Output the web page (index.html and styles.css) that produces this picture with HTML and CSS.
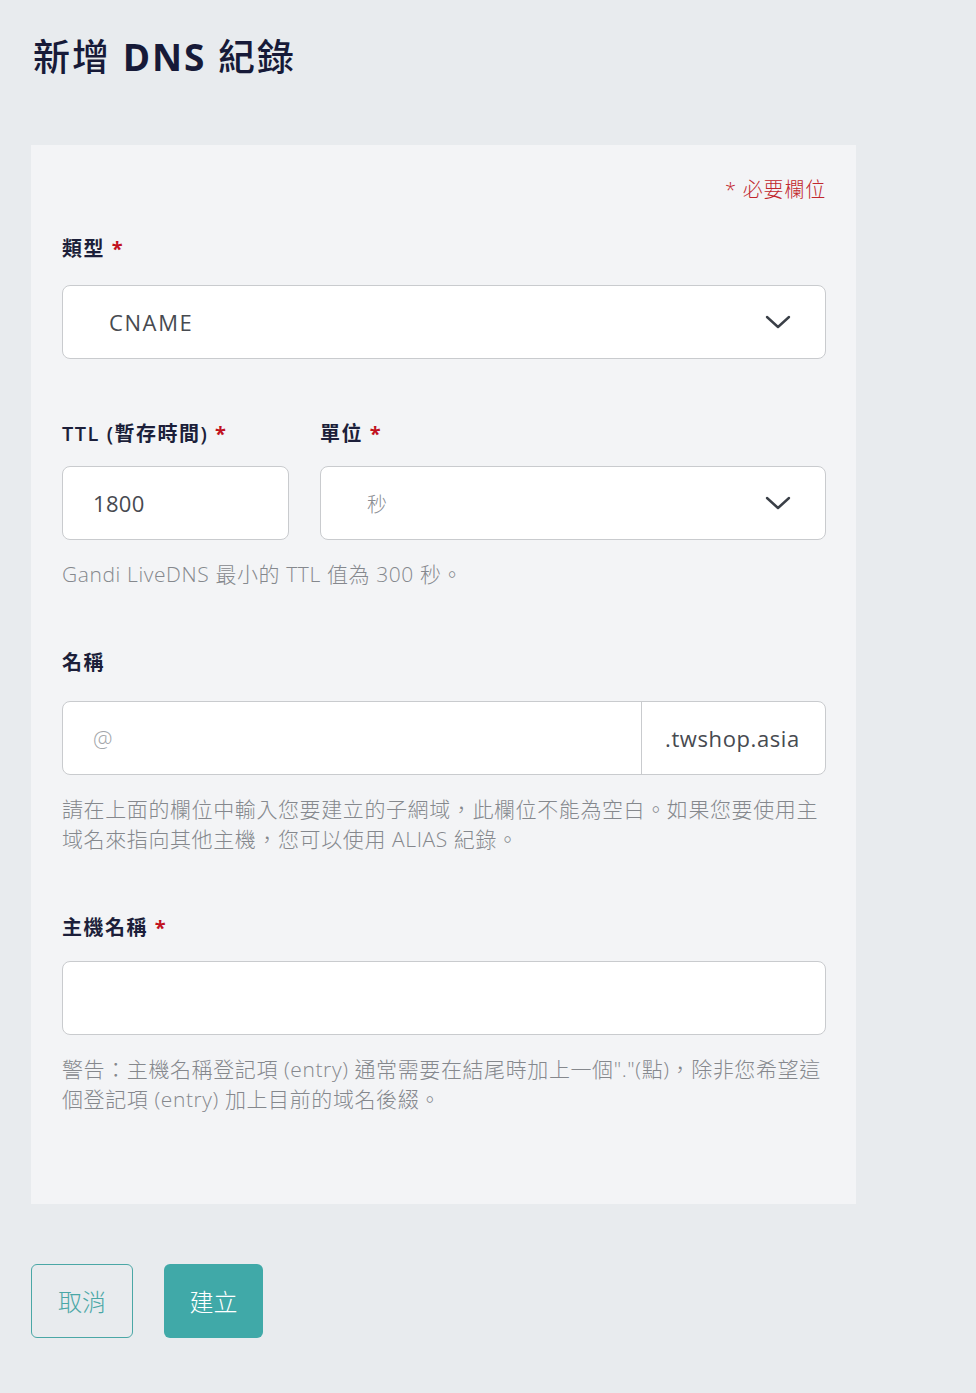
FILE: index.html
```html
<!DOCTYPE html>
<html lang="zh-Hant">
<head>
<meta charset="utf-8">
<title>新增 DNS 紀錄</title>
<link rel="stylesheet" href="styles.css">
</head>
<body>
<div class="page">
  <h1 class="title">新增 <span class="title-latin">DNS</span> 紀錄</h1>
  <form class="card">
    <div class="required-note">* 必要欄位</div>

    <div class="field">
      <label class="label">類型 <span class="star">*</span></label>
      <div class="control select">
        <span class="value">CNAME</span>
        <svg class="chev" width="26" height="16" viewBox="0 0 26 16"><path d="M2 3 L13 13 L24 3" fill="none" stroke="#3a3f47" stroke-width="2.4" stroke-linecap="round" stroke-linejoin="round"/></svg>
      </div>
    </div>

    <div class="row">
      <div class="field ttl">
        <label class="label">TTL (暫存時間) <span class="star">*</span></label>
        <div class="control input"><span class="value num">1800</span></div>
      </div>
      <div class="field unit">
        <label class="label">單位 <span class="star">*</span></label>
        <div class="control select">
          <span class="value muted">秒</span>
          <svg class="chev" width="26" height="16" viewBox="0 0 26 16"><path d="M2 3 L13 13 L24 3" fill="none" stroke="#3a3f47" stroke-width="2.4" stroke-linecap="round" stroke-linejoin="round"/></svg>
        </div>
      </div>
    </div>
    <p class="help">Gandi LiveDNS 最小的 TTL 值為 300 秒。</p>

    <div class="field name-field">
      <label class="label">名稱</label>
      <div class="control group">
        <span class="group-main"><span class="value placeholder">@</span></span>
        <span class="group-suffix">.twshop.asia</span>
      </div>
    </div>
    <p class="help">請在上面的欄位中輸入您要建立的子網域，此欄位不能為空白。如果您要使用主域名來指向其他主機，您可以使用 ALIAS 紀錄。</p>

    <div class="field host-field">
      <label class="label">主機名稱 <span class="star">*</span></label>
      <div class="control input"></div>
    </div>
    <p class="help">警告：主機名稱登記項 (entry) 通常需要在結尾時加上一個"."(點)，除非您希望這個登記項 (entry) 加上目前的域名後綴。</p>
  </form>

  <div class="actions">
    <button class="btn btn-outline" type="button">取消</button>
    <button class="btn btn-primary" type="button">建立</button>
  </div>
</div>
</body>
</html>
```

FILE: styles.css
```css
html, body {
  margin: 0;
  padding: 0;
  background: #e8ebee;
}
body {
  font-family: "Open Sans", "Noto Sans CJK TC", sans-serif;
  color: #1c1f3a;
}
.page {
  padding: 30px 0 60px 31px;
  width: 825px;
}
.title {
  margin: 0 0 0 2px;
  font-size: 37px;
  line-height: 54px;
  font-weight: 500;
  color: #171a38;
  letter-spacing: 2px;
}
.title-latin {
  font-weight: 700;
}
.card {
  margin-top: 61px;
  background: #f3f4f6;
  padding: 30px 30px 90px 31px;
  display: flex;
  flex-direction: column;
}
.required-note {
  text-align: right;
  color: #c1272d;
  font-size: 20px;
  line-height: 30px;
  font-weight: 300;
  letter-spacing: 0.8px;
  margin-bottom: 30px;
}
.field {
  display: flex;
  flex-direction: column;
}
.label {
  font-size: 20px;
  line-height: 28px;
  font-weight: 600;
  color: #1c1f3a;
  letter-spacing: 1.5px;
  margin-bottom: 22px;
}
.star {
  color: #c1121f;
  font-weight: 700;
}
.control {
  box-sizing: border-box;
  height: 74px;
  background: #fff;
  border: 1px solid #c9cbce;
  border-radius: 8px;
  display: flex;
  align-items: center;
}
.select {
  padding: 0 34px 0 46px;
  justify-content: space-between;
}
.input {
  padding: 0 30px;
}
.value {
  font-size: 22px;
  color: #474a50;
  letter-spacing: 1.6px;
}
.value.num {
  letter-spacing: 0.3px;
}
.value.muted {
  color: #8a8d92;
  font-size: 20px;
  font-weight: 300;
}
.value.placeholder {
  color: #a3a6aa;
  font-weight: 300;
}
.chev {
  display: block;
}
.row {
  margin-top: 61px;
  display: flex;
  gap: 31px;
}
.row .label {
  margin-bottom: 18px;
}
.ttl {
  width: 227px;
}
.unit {
  flex: 1;
}
.help {
  margin: 19px 0 0;
  font-size: 21px;
  line-height: 30px;
  color: #85888d;
  font-weight: 300;
  letter-spacing: 0.6px;
}
.name-field {
  margin-top: 60px;
}
.name-field .label {
  margin-bottom: 24px;
}
.host-field {
  margin-top: 60px;
}
.host-field .label {
  margin-bottom: 19px;
}
.group {
  padding: 0;
  overflow: hidden;
}
.group-main {
  flex: 1;
  height: 100%;
  display: flex;
  align-items: center;
  padding-left: 30px;
  border-right: 1px solid #c9cbce;
}
.group-suffix {
  width: 183px;
  box-sizing: border-box;
  padding-left: 23px;
  font-size: 22px;
  color: #474a50;
  letter-spacing: 0.6px;
}
.actions {
  margin-top: 60px;
  display: flex;
  gap: 31px;
}
.btn {
  box-sizing: border-box;
  height: 74px;
  border-radius: 6px;
  font-family: "Noto Sans CJK TC", sans-serif;
  font-size: 24px;
  font-weight: 300;
  cursor: pointer;
  padding-bottom: 3px;
}
.btn-outline {
  width: 102px;
  background: transparent;
  border: 1px solid #4aa7a6;
  color: #4aa7a6;
}
.btn-primary {
  width: 99px;
  background: #40a9a8;
  border: none;
  color: #fff;
}
```
